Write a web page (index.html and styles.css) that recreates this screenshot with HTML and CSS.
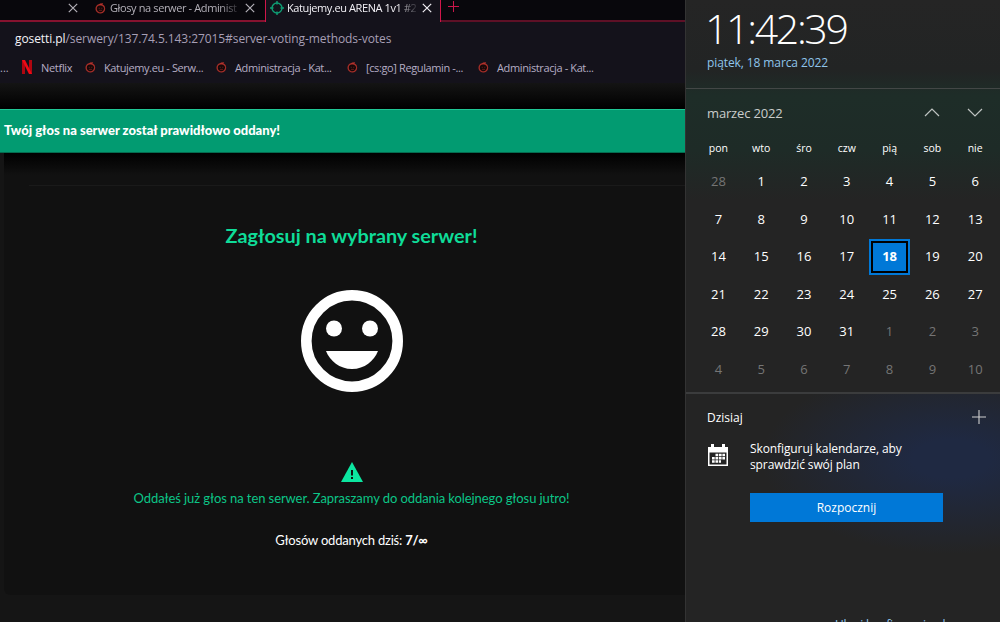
FILE: index.html
```
<!DOCTYPE html>
<html lang="pl">
<head>
    <meta charset="UTF-8">
    <meta name="viewport" content="width=device-width, initial-scale=1.0">
    <title>Katujemy.eu ARENA 1v1</title>
    <link rel="stylesheet" href="styles.css">
</head>
<body>
    <svg width="0" height="0" class="defs">
        <symbol id="logo" viewBox="0 0 12 12">
            <path d="M2.600 3.400C.6 5.500.8 8.900 3 10.400c2 1.300 5 1 6.400-.8 1.500-2 1.200-4.900-.5-6.200-1.800-1.300-4.500-1.200-6.300 0z" fill="#160808" stroke="#a32d28" stroke-width="1.500"/>
            <path d="M3.500 3l2-2L9 .8 7.500 3z" fill="#b5322c"/>
            <path d="M4 6.300h1.300M6.800 6.300H8M4.300 8.600h3.400" stroke="#7c2422" stroke-width=".8"/>
        </symbol>
        <symbol id="close" viewBox="0 0 10 10">
            <path d="M.8.8l8.400 8.400M9.200.8L.8 9.200" fill="none" stroke="currentColor" stroke-width="1.200"/>
        </symbol>
    </svg>

    <div class="browser">
        <div class="tabs">
            <div class="tab tab-first">
                <svg class="close"><use href="#close"/></svg>
            </div>
            <div class="tab tab-second">
                <svg class="logo"><use href="#logo"/></svg>
                <span class="tab-title">Głosy na serwer - Administ</span>
                <svg class="close"><use href="#close"/></svg>
            </div>
            <div class="tab tab-active">
                <svg class="target" viewBox="0 0 14 14">
                    <circle cx="7" cy="7" r="5" fill="none" stroke="#0f9d74" stroke-width="1.400"/>
                    <path d="M7 0v3.500M7 10.500V14M0 7h3.500M10.500 7H14" stroke="#0f9d74" stroke-width="1.400"/>
                </svg>
                <span class="tab-title">Katujemy.eu ARENA 1v1 #2</span>
                <svg class="close"><use href="#close"/></svg>
            </div>
            <div class="tab-rest">
                <svg class="new-tab" viewBox="0 0 11 11"><path d="M5.500 0v11M0 5.500h11" stroke="#c9164a" stroke-width="1"/></svg>
            </div>
        </div>
        <div class="address"><span class="host">gosetti.pl</span>/serwery/137.74.5.143:27015#server-voting-methods-votes</div>
        <div class="bookmarks">
            <span class="more">...</span>
            <span class="bookmark bm-netflix">
                <svg class="netflix" viewBox="0 0 10 14">
                    <path d="M0 0h3v14H0zM7 0h3v14H7z" fill="#b00610"/>
                    <path d="M0 0h3l7 14H7z" fill="#ee0a16"/>
                </svg>
                <span class="bm-text">Netflix</span>
            </span>
            <span class="bookmark bm-server"><svg class="logo"><use href="#logo"/></svg><span class="bm-text">Katujemy.eu - Serw...</span></span>
            <span class="bookmark bm-admin"><svg class="logo"><use href="#logo"/></svg><span class="bm-text">Administracja - Kat...</span></span>
            <span class="bookmark bm-rules"><svg class="logo"><use href="#logo"/></svg><span class="bm-text">[cs:go] Regulamin -...</span></span>
            <span class="bookmark bm-admin"><svg class="logo"><use href="#logo"/></svg><span class="bm-text">Administracja - Kat...</span></span>
        </div>

        <div class="page">
            <div class="page-top"></div>
            <div class="alert"><span class="alert-text">Twój głos na serwer został prawidłowo oddany!</span></div>
            <div class="card">
                <div class="divider"></div>
                <h1 class="heading">Zagłosuj na wybrany serwer!</h1>
                <svg class="smile" viewBox="0 0 102 102">
                    <circle cx="51" cy="51" r="45.700" fill="none" stroke="#fff" stroke-width="10.600"/>
                    <circle cx="33" cy="38.500" r="8" fill="#fff"/>
                    <circle cx="69" cy="38.500" r="8" fill="#fff"/>
                    <path d="M25 61h52c-4 10-13.500 18-26 18s-22-8-26-18z" fill="#fff"/>
                </svg>
                <svg class="warning" viewBox="0 0 22 20">
                    <path d="M11 0l11 20H0z" fill="#0ce6a0"/>
                    <path d="M10 8h2v5.500h-2zM10 15h2v2h-2z" fill="#111"/>
                </svg>
                <p class="voted">Oddałeś już głos na ten serwer. Zapraszamy do oddania kolejnego głosu jutro!</p>
                <p class="count">Głosów oddanych dziś: <b>7/∞</b></p>
            </div>
        </div>
    </div>

    <div class="panel">
        <div class="clock">
            <div class="time">11:42:39</div>
            <div class="date">piątek, 18 marca 2022</div>
        </div>
        <div class="calendar">
            <div class="month">
                <span class="month-name">marzec 2022</span>
                <svg class="arrow" viewBox="0 0 16 9"><path d="M1 8l7-7 7 7" fill="none" stroke="#bfc4c2" stroke-width="1.200"/></svg>
                <svg class="arrow" viewBox="0 0 16 9"><path d="M1 1l7 7 7-7" fill="none" stroke="#bfc4c2" stroke-width="1.200"/></svg>
            </div>
            <div class="weekdays">
                <span>pon</span><span>wto</span><span>śro</span><span>czw</span><span>pią</span><span>sob</span><span>nie</span>
            </div>
            <div class="days">
                <span class="other">28</span><span>1</span><span>2</span><span>3</span><span>4</span><span>5</span><span>6</span>
                <span>7</span><span>8</span><span>9</span><span>10</span><span>11</span><span>12</span><span>13</span>
                <span>14</span><span>15</span><span>16</span><span>17</span><span class="today">18</span><span>19</span><span>20</span>
                <span>21</span><span>22</span><span>23</span><span>24</span><span>25</span><span>26</span><span>27</span>
                <span>28</span><span>29</span><span>30</span><span>31</span><span class="other">1</span><span class="other">2</span><span class="other">3</span>
                <span class="other">4</span><span class="other">5</span><span class="other">6</span><span class="other">7</span><span class="other">8</span><span class="other">9</span><span class="other">10</span>
            </div>
        </div>
        <div class="agenda">
            <div class="agenda-head">
                <span class="agenda-title">Dzisiaj</span>
                <svg class="add" viewBox="0 0 14 14"><path d="M7 0v14M0 7h14" stroke="#d0d0d0" stroke-width="1.100"/></svg>
            </div>
            <div class="setup">
                <svg class="cal-icon" viewBox="0 0 20 22">
                    <path d="M0 3h20v19H0zM1.500 8.500v12h17v-12z" fill="#fff" fill-rule="evenodd"/>
                    <path d="M3 0h3v4H3zM14 0h3v4h-3z" fill="#fff"/>
                    <path d="M7.500 11h9.500M4 14.300h13M4 17.600h9" stroke="#fff" stroke-width="2.500" stroke-dasharray="2.700 .75"/>
                </svg>
                <p class="setup-text">Skonfiguruj kalendarze, aby<br>sprawdzić swój plan</p>
            </div>
            <button class="start">Rozpocznij</button>
            <a class="hide">Ukryj konfigurację planu</a>
        </div>
    </div>
</body>
</html>
```
FILE: styles.css
```
* {
    box-sizing: border-box;
}
body {
    margin: 0;
    width: 1000px;
    height: 622px;
    display: flex;
    overflow: hidden;
    background-color: #111111;
    font-family: "Open Sans", "Noto Sans", sans-serif;
    white-space: nowrap;
}
p, h1 {
    margin: 0;
}
svg {
    flex: none;
}
.defs {
    display: none;
}
.browser {
    width: 685px;
    height: 622px;
    display: flex;
    flex-direction: column;
    background-color: #14121b;
}

/* tabs */
.tabs {
    display: flex;
    height: 22px;
    font-size: 11px;
    color: #b3b0b8;
}
.tab {
    display: flex;
    align-items: center;
    padding-bottom: 5px;
    background-color: #08070c;
    border-bottom: 2px solid #86122f;
}
.tab-first {
    width: 88px;
    padding-left: 68px;
}
.tab-second {
    width: 177px;
    padding-left: 7px;
}
.tab-active {
    width: 176px;
    padding-left: 4px;
    padding-bottom: 7px;
    background-color: #14121b;
    color: #f2f0f5;
    border: solid #d0164a;
    border-width: 0 1px;
}
.tab-title {
    -webkit-mask-image: linear-gradient(to right, #000 85%, rgba(0, 0, 0, 0.15));
    mask-image: linear-gradient(to right, #000 85%, rgba(0, 0, 0, 0.15));
}
.tab-second .tab-title {
    width: 129px;
    margin: 0 6px 0 4px;
    letter-spacing: -0.38px;
}
.tab-active .tab-title {
    width: 129px;
    margin: 0 6px 0 3px;
    letter-spacing: -0.4px;
}
.close {
    width: 10px;
    height: 10px;
}
.target {
    width: 14px;
    height: 14px;
}
.logo {
    width: 11px;
    height: 12px;
}
.tab-rest {
    flex: 1;
    padding: 1px 0 0 7px;
    line-height: 0;
    background-color: #08070c;
    border-bottom: 2px solid #5e1026;
}
.new-tab {
    width: 11px;
    height: 11px;
}

/* address and bookmarks */
.address {
    height: 34px;
    padding-left: 15px;
    line-height: 34px;
    font-size: 12px;
    letter-spacing: -0.08px;
    color: #a79fb5;
}
.host {
    color: #f4f2f7;
}
.bookmarks {
    display: flex;
    align-items: center;
    height: 27px;
    padding-bottom: 5px;
    font-size: 11px;
    color: #b4adc4;
}
.more {
    width: 22px;
}
.bookmark {
    display: flex;
    align-items: center;
    letter-spacing: -0.38px;
}
.netflix {
    width: 10px;
    height: 14px;
}
.bm-netflix {
    width: 63px;
    gap: 9px;
    letter-spacing: -0.3px;
}
.bm-server, .bm-admin, .bm-rules {
    width: 131px;
    gap: 8px;
}

/* voting page */
.page {
    flex: 1;
    background-color: #151515;
}
.page-top {
    height: 26px;
    background: linear-gradient(#141414, #000000);
}
.alert {
    height: 44px;
    padding-left: 4px;
    line-height: 41px;
    background-color: #029b71;
    border-top: 1px solid #1fc795;
    border-bottom: 1px solid #056b4f;
    color: #ffffff;
    font-family: Lato, "Open Sans", sans-serif;
    font-size: 13px;
    font-weight: 900;
}
.card {
    display: flex;
    flex-direction: column;
    align-items: center;
    height: 442px;
    margin-left: 4px;
    padding-left: 14px;
    border-radius: 0 0 0 6px;
    background: linear-gradient(#000000, #111111 22px);
    font-family: Lato, "Open Sans", sans-serif;
}
.divider {
    align-self: flex-end;
    width: 656px;
    height: 1px;
    margin-top: 32px;
    background-color: #1a1a1a;
}
.heading {
    margin-top: 35px;
    line-height: 28px;
    font-size: 19.8px;
    color: #0fdc98;
}
.smile {
    width: 102px;
    height: 102px;
    margin-top: 41px;
}
.warning {
    width: 22px;
    height: 20px;
    margin-top: 70px;
}
.voted {
    margin-top: 6px;
    line-height: 20px;
    font-size: 13px;
    letter-spacing: -0.08px;
    color: #0cc587;
}
.count {
    margin-top: 22px;
    line-height: 20px;
    font-size: 13px;
    letter-spacing: -0.2px;
    color: #ffffff;
}

/* clock flyout */
.panel {
    width: 315px;
    height: 622px;
    border-left: 1px solid #333333;
    background: linear-gradient(#252525 0, #222424 70px, #1e2d28 95px, #1e2b27 150px, #242424 200px, #242424);
    color: #ffffff;
}
.clock {
    height: 89px;
    padding-left: 21px;
    border-bottom: 1px solid #434746;
}
.time {
    height: 53px;
    line-height: 56px;
    margin-left: -2px;
    font-size: 41px;
    font-weight: 300;
    letter-spacing: -2.3px;
}
.date {
    line-height: 20px;
    font-size: 12px;
    letter-spacing: -0.1px;
    color: #8fc4ec;
}
.calendar {
    height: 305px;
    border-bottom: 2px solid #3b3c3d;
}
.month {
    display: flex;
    align-items: center;
    height: 48px;
    padding: 0 17px 1px 21px;
    font-size: 13px;
    letter-spacing: -0.15px;
    color: #c9cccb;
}
.month-name {
    flex: 1;
}
.arrow {
    width: 16px;
    height: 9px;
}
.arrow + .arrow {
    margin-left: 27px;
}
.weekdays, .days {
    display: grid;
    grid-template-columns: repeat(7, 42.8px);
    padding-left: 11px;
    text-align: center;
}
.weekdays {
    height: 26px;
    line-height: 22px;
    font-size: 10.5px;
}
.days {
    grid-auto-rows: 37.5px;
    line-height: 37.5px;
    font-size: 13px;
}
.other {
    color: #757575;
}
.today {
    justify-self: center;
    align-self: center;
    width: 41px;
    height: 36px;
    margin-top: 1px;
    line-height: 31px;
    background-color: #0078d7;
    border: 2px solid #0078d7;
    box-shadow: inset 0 0 0 2px #000000;
    font-weight: bold;
}
.agenda {
    height: 228px;
    padding-left: 21px;
    background: radial-gradient(ellipse 190px 95px at 265px 65px, #1f2942 20%, rgba(36, 36, 36, 0));
}
.agenda-head {
    display: flex;
    align-items: center;
    justify-content: space-between;
    height: 46px;
    padding-right: 14px;
    font-size: 12px;
}
.add {
    width: 14px;
    height: 14px;
}
.setup {
    display: flex;
    gap: 22px;
    padding: 1px 0 0 1px;
}
.cal-icon {
    width: 20px;
    height: 22px;
    margin-top: 3px;
}
.setup-text {
    line-height: 16px;
    font-size: 12px;
    letter-spacing: -0.1px;
}
.start {
    display: block;
    width: 193px;
    height: 29px;
    margin: 20px 0 0 43px;
    padding: 0;
    border: none;
    background-color: #0078d7;
    color: #ffffff;
    font-family: inherit;
    font-size: 12px;
}
.hide {
    display: block;
    margin: 94px 0 0 128px;
    line-height: 18px;
    font-size: 12px;
    letter-spacing: -0.2px;
    color: #8fc4ec;
}
```
